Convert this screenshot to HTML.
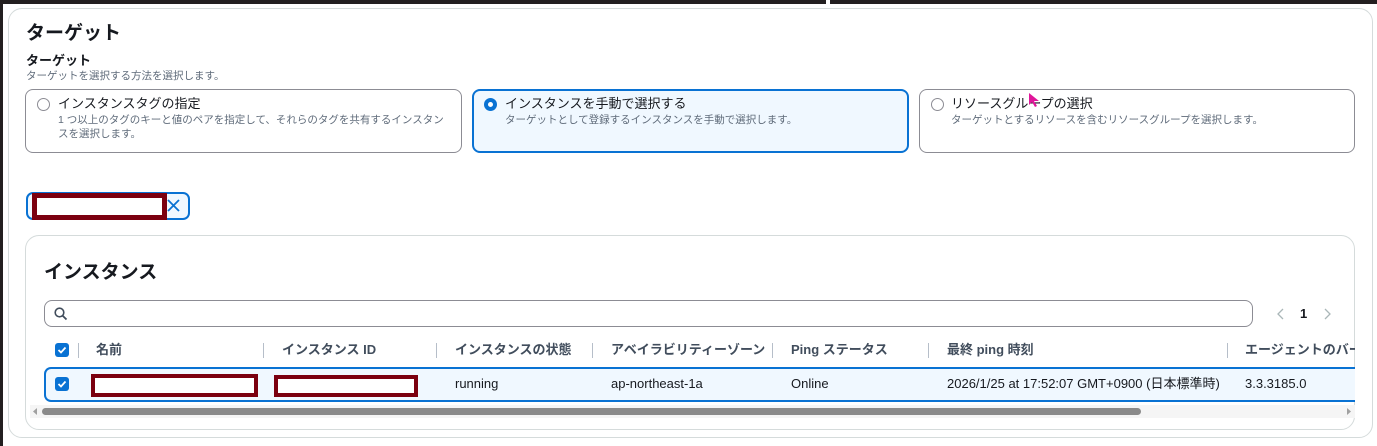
<!DOCTYPE html>
<html><head><meta charset="utf-8"><style>
*{box-sizing:border-box;margin:0;padding:0}
body{width:1377px;height:446px;background:#fff;position:relative;overflow:hidden;font-family:"Liberation Sans","Noto Sans CJK JP",sans-serif;color:#16191f}
.a{position:absolute}
.topbar{left:0;top:0;width:1377px;height:4px;background:#231f20}
.leftbar{left:0;top:0;width:3px;height:446px;background:#231f20}
.outer{left:8px;top:8px;width:1365px;height:430px;border:1px solid #d5dbdb;border-radius:14px;background:#fff}
.card{border:1px solid #8c8c94;border-radius:8px;background:#fff}
.card.sel{border:2px solid #0972d3;background:#f0f8ff}
.radio{width:13px;height:13px;border:1px solid #8c8c94;border-radius:50%;background:#fff}
.radio.on{border:4px solid #0972d3}
.t{font-size:13px;white-space:nowrap;line-height:16px}
.s{font-size:10.5px;color:#5f6b7a;white-space:nowrap;line-height:14px}
.cb{width:14px;height:14px;background:#0972d3;border-radius:3px}
.cb svg{position:absolute;left:2px;top:2px}
.hdr{font-size:13px;font-weight:bold;color:#414d5c;white-space:nowrap;line-height:16px}
.sep{width:1px;height:15px;background:#b6bec9}
.red{border:4px solid #7b0010;background:#fff}
</style></head><body>
<div class="a topbar"></div><div class="a leftbar"></div>
<div class="a" style="left:826px;top:0;width:4px;height:4px;background:#fff"></div>
<div class="a outer"></div>
<div class="a" style="left:26px;top:18px;font-size:19px;font-weight:bold">ターゲット</div>
<div class="a" style="left:26px;top:53px;font-size:13px;font-weight:bold;line-height:16px">ターゲット</div>
<div class="a s" style="left:26px;top:69px">ターゲットを選択する方法を選択します。</div>

<div class="a card" style="left:25px;top:89px;width:437px;height:64px"></div>
<div class="a radio" style="left:37px;top:98px"></div>
<div class="a t" style="left:58px;top:96px">インスタンスタグの指定</div>
<div class="a s" style="left:58px;top:113px">1 つ以上のタグのキーと値のペアを指定して、それらのタグを共有するインスタン</div>
<div class="a s" style="left:58px;top:127px">スを選択します。</div>

<div class="a card sel" style="left:472px;top:89px;width:437px;height:64px"></div>
<div class="a radio on" style="left:484px;top:98px"></div>
<div class="a t" style="left:505px;top:96px">インスタンスを手動で選択する</div>
<div class="a s" style="left:505px;top:113px">ターゲットとして登録するインスタンスを手動で選択します。</div>

<div class="a card" style="left:919px;top:89px;width:436px;height:64px"></div>
<div class="a radio" style="left:931px;top:98px"></div>
<div class="a t" style="left:951px;top:96px">リソースグループの選択</div>
<div class="a s" style="left:951px;top:113px">ターゲットとするリソースを含むリソースグループを選択します。</div>
<svg class="a" style="left:1028px;top:92px" width="14" height="16"><path d="M1 1 L1 13 L4 10 L7 15 L9 14 L6 9 L11 9 Z" fill="#e0169a"/></svg>

<div class="a" style="left:26px;top:192px;width:164px;height:28px;border:2px solid #0972d3;border-radius:7px;background:#f0f8ff"></div>
<div class="a red" style="left:32px;top:193px;width:135px;height:27px;border-width:5px"></div>
<svg class="a" style="left:167px;top:199px" width="13" height="13"><path d="M1 1L12 12M12 1L1 12" stroke="#0972d3" stroke-width="1.8"/></svg>

<div class="a" style="left:25px;top:235px;width:1330px;height:195px;border:1px solid #d5dbdb;border-radius:14px;background:#fff"></div>
<div class="a" style="left:44px;top:257px;font-size:19px;font-weight:bold">インスタンス</div>
<div class="a" style="left:44px;top:300px;width:1209px;height:27px;border:1px solid #8c8c94;border-radius:8px"></div>
<svg class="a" style="left:54px;top:307px" width="14" height="14"><circle cx="5.5" cy="5.5" r="4.3" fill="none" stroke="#414d5c" stroke-width="1.6"/><path d="M8.7 8.7L12.5 12.5" stroke="#414d5c" stroke-width="1.8"/></svg>
<svg class="a" style="left:1275px;top:307px" width="60" height="14"><path d="M8 2L3 7L8 12" fill="none" stroke="#aab7b8" stroke-width="1.3"/><path d="M50 2L55 7L50 12" fill="none" stroke="#aab7b8" stroke-width="1.3"/></svg>
<div class="a" style="left:1300px;top:306px;font-size:13px;font-weight:bold">1</div>

<div class="a cb" style="left:55px;top:343px"><svg width="10" height="10"><path d="M1.5 5L4 7.5L8.5 2.5" fill="none" stroke="#fff" stroke-width="1.8"/></svg></div>
<div class="a sep" style="left:78px;top:343px"></div>
<div class="a hdr" style="left:96px;top:342px">名前</div>
<div class="a sep" style="left:263px;top:343px"></div>
<div class="a hdr" style="left:282px;top:342px">インスタンス ID</div>
<div class="a sep" style="left:436px;top:343px"></div>
<div class="a hdr" style="left:455px;top:342px">インスタンスの状態</div>
<div class="a sep" style="left:592px;top:343px"></div>
<div class="a hdr" style="left:611px;top:342px">アベイラビリティーゾーン</div>
<div class="a sep" style="left:772px;top:343px"></div>
<div class="a hdr" style="left:791px;top:342px">Ping ステータス</div>
<div class="a sep" style="left:928px;top:343px"></div>
<div class="a hdr" style="left:947px;top:342px">最終 ping 時刻</div>
<div class="a sep" style="left:1227px;top:343px"></div>
<div class="a hdr" style="left:1245px;top:342px;width:110px;overflow:hidden">エージェントのバージョン</div>

<div class="a" style="left:44px;top:367px;width:1311px;height:35px;border:2px solid #0972d3;border-right:none;border-radius:7px 0 0 7px;background:#f0f8ff"></div>
<div class="a cb" style="left:55px;top:377px"><svg width="10" height="10"><path d="M1.5 5L4 7.5L8.5 2.5" fill="none" stroke="#fff" stroke-width="1.8"/></svg></div>
<div class="a red" style="left:91px;top:374px;width:167px;height:23px"></div>
<div class="a red" style="left:274px;top:375px;width:144px;height:22px"></div>
<div class="a t" style="left:455px;top:376px">running</div>
<div class="a t" style="left:611px;top:376px">ap-northeast-1a</div>
<div class="a t" style="left:791px;top:376px">Online</div>
<div class="a t" style="left:947px;top:376px">2026/1/25 at 17:52:07 GMT+0900 (日本標準時)</div>
<div class="a t" style="left:1245px;top:376px">3.3.3185.0</div>

<div class="a" style="left:30px;top:405px;width:1325px;height:13px;background:#f5f5f5"></div>
<svg class="a" style="left:31px;top:407px" width="8" height="9"><path d="M6 1L2 4.5L6 8Z" fill="#a0a0a0"/></svg>
<div class="a" style="left:42px;top:408px;width:1099px;height:7px;border-radius:4px;background:#8a8a8a"></div>
<svg class="a" style="left:1345px;top:407px" width="8" height="9"><path d="M2 1L6 4.5L2 8Z" fill="#a0a0a0"/></svg>
</body></html>
